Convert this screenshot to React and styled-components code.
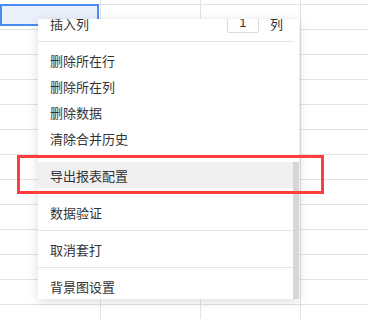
import styled, {createGlobalStyle} from "styled-components";

const GlobalStyle = createGlobalStyle`
  html, body {
    margin: 0;
    padding: 0;
    background: #fff;
    overflow: hidden;
  }
  body {
    font-family: "Noto Sans CJK SC", "Noto Sans", sans-serif;
    color: #333;
  }
`;

const COLS = 4;
const ROWS = 14;

// menu is scrolled to the bottom, so the first row is cut at the top
const menuItems = [
    {type: "input", label: "插入列", unit: "列"},
    {type: "divider"},
    {label: "删除所在行"},
    {label: "删除所在列"},
    {label: "删除数据"},
    {label: "清除合并历史"},
    {type: "divider"},
    {label: "导出报表配置", active: true},
    {type: "divider"},
    {label: "数据验证"},
    {type: "divider"},
    {label: "取消套打"},
    {type: "divider"},
    {label: "背景图设置"},
];

const App = () => {
    const cells = [];
    for (let r = 0; r < ROWS; r++) {
        for (let c = 0; c < COLS; c++) {
            cells.push(<Cell key={r + "-" + c}/>);
        }
    }

    return (
        <>
            <GlobalStyle/>
            <Sheet>
                <Grid>{cells}</Grid>
                <Selection/>

                <Menu>
                    <Viewport>
                        {menuItems.map((item, i) => {
                            if (item.type === "divider") return <Divider key={i}/>;
                            if (item.type === "input") {
                                return (
                                    <Item key={i}>
                                        <span>{item.label}</span>
                                        <InputGroup>
                                            <CountBox>1</CountBox>
                                            <span>{item.unit}</span>
                                        </InputGroup>
                                    </Item>
                                );
                            }
                            return <Item key={i} $active={item.active}>{item.label}</Item>;
                        })}
                    </Viewport>
                    <ScrollTrack>
                        <ScrollThumb/>
                    </ScrollTrack>
                </Menu>

                <Annotation/>
            </Sheet>
        </>
    );
};

const Sheet = styled.div`
  position: relative;
  width: 368px;
  height: 319px;
  overflow: hidden;
`;

const Grid = styled.div`
  display: grid;
  grid-template-columns: 101px 100px 100px 100px;
  grid-template-rows: 5px repeat(${ROWS - 1}, 25px);
`;

const Cell = styled.div`
  box-sizing: border-box;
  border-right: 1px solid #e2e2e2;
  border-bottom: 1px solid #e2e2e2;
`;

const Selection = styled.div`
  position: absolute;
  left: 0;
  top: 4px;
  width: 99px;
  height: 22px;
  box-sizing: border-box;
  border: 2px solid #4d8af0;
  background: #eaf1fd;
`;

const Menu = styled.div`
  position: absolute;
  left: 38px;
  top: 19px;
  width: 261px;
  height: 280px;
  display: flex;
  background: #fff;
  box-shadow: 0 2px 10px rgba(0, 0, 0, 0.14);
`;

const Viewport = styled.div`
  flex: 1;
  display: flex;
  flex-direction: column;
  justify-content: flex-end;
  overflow: hidden;
`;

const Item = styled.div`
  flex: none;
  display: flex;
  align-items: center;
  justify-content: space-between;
  height: 26px;
  padding: 0 10px 0 12px;
  font-size: 13px;
  color: #333;
  background: ${props => props.$active ? "#f0f0f0" : "transparent"};
  white-space: nowrap;
`;

const InputGroup = styled.div`
  display: flex;
  align-items: center;
  gap: 11px;
`;

const CountBox = styled.div`
  box-sizing: border-box;
  width: 32px;
  height: 20px;
  border: 1px solid #dcdcdc;
  border-radius: 2px;
  font-family: "Liberation Sans", Arial, sans-serif;
  font-size: 13px;
  line-height: 18px;
  text-align: center;
  color: #333;
`;

const Divider = styled.div`
  flex: none;
  height: 1px;
  margin: 5px 0;
  background: #e5e5e5;
`;

const ScrollTrack = styled.div`
  width: 6px;
  display: flex;
  flex-direction: column;
  justify-content: flex-end;
`;

const ScrollThumb = styled.div`
  height: 137px;
  background: #d6d6d6;
`;

const Annotation = styled.div`
  position: absolute;
  left: 17px;
  top: 155px;
  width: 307px;
  height: 39px;
  box-sizing: border-box;
  border: 3px solid #ff3d3d;
`;

export default App;
